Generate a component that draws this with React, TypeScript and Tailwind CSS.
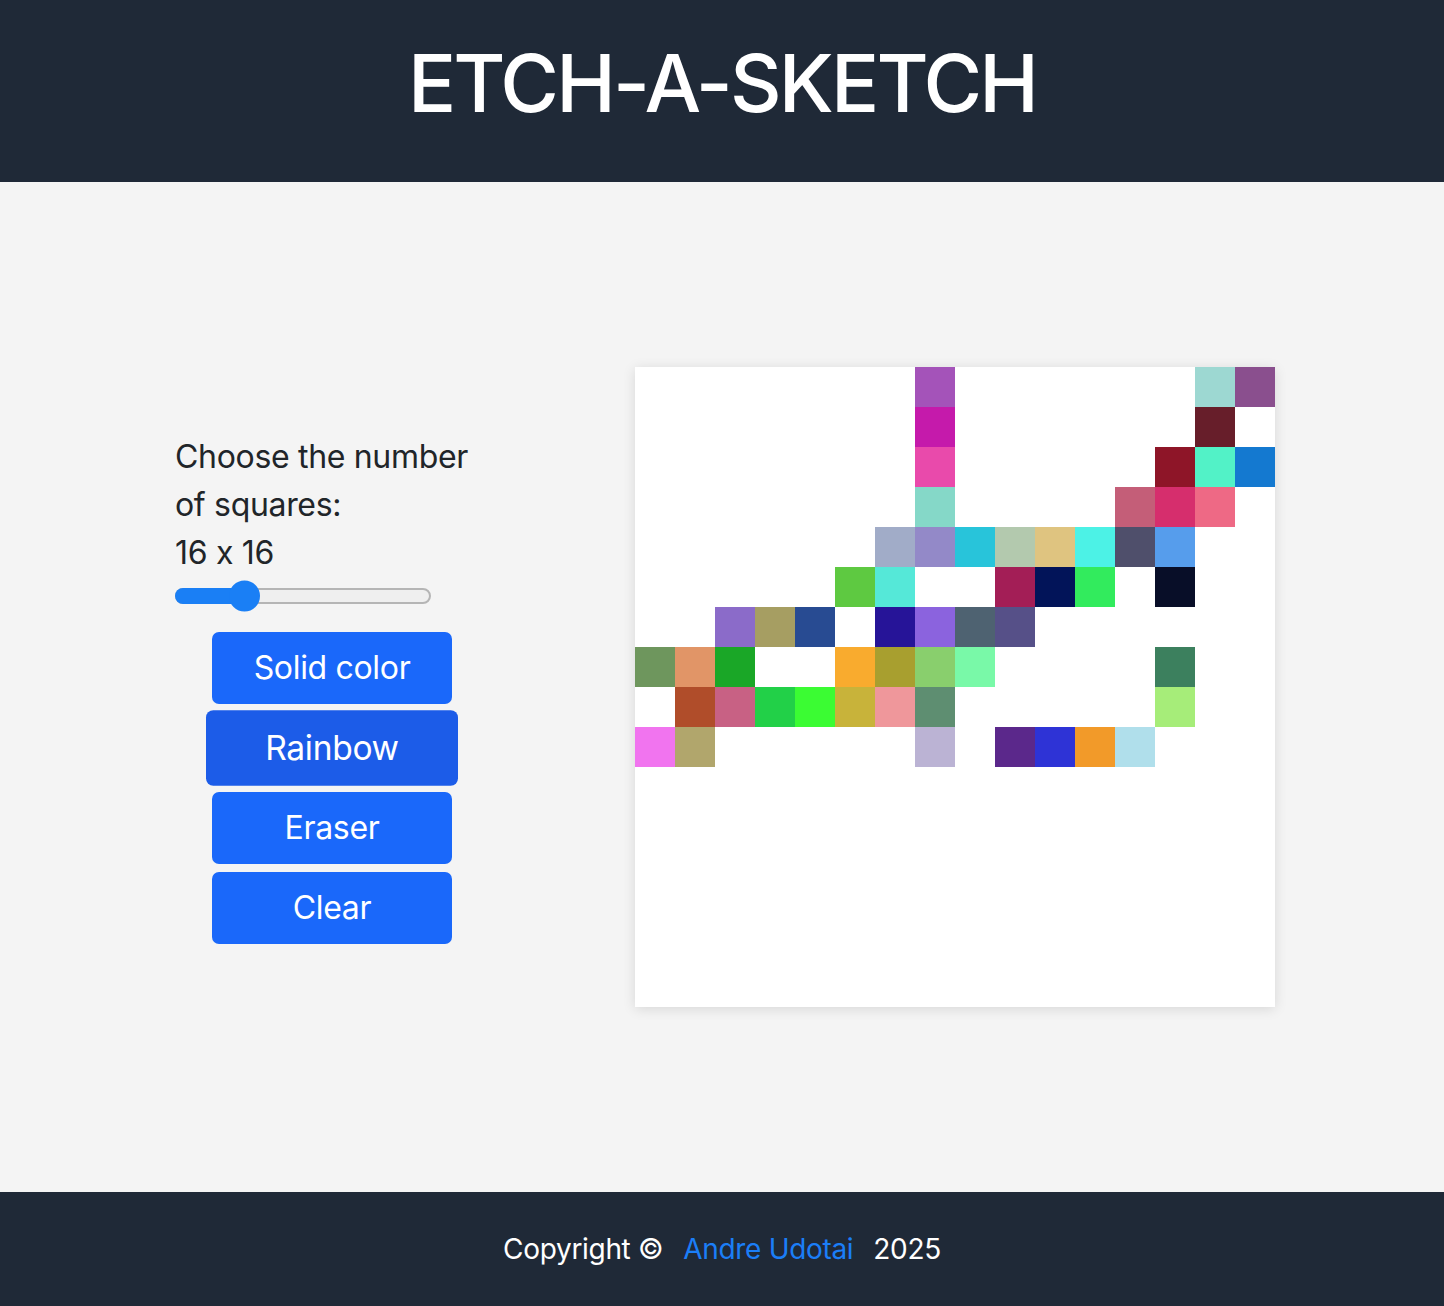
import { useState } from "react";

const W = "#ffffff";

// painted cells, [row, col, colour]; everything else stays white
const painted: [number, number, string][] = [
  [0, 7, "#a453b9"], [0, 14, "#9dd8d2"], [0, 15, "#8a4f8e"],
  [1, 7, "#c51aab"], [1, 14, "#671e2a"],
  [2, 7, "#e94aab"], [2, 13, "#8e1528"], [2, 14, "#52f2c7"], [2, 15, "#1479d0"],
  [3, 7, "#85d8c8"], [3, 12, "#c45e78"], [3, 13, "#d62e6d"], [3, 14, "#ee6985"],
  [4, 6, "#a1acc8"], [4, 7, "#9389c8"], [4, 8, "#28c4da"], [4, 9, "#b3c9ae"],
  [4, 10, "#dfc480"], [4, 11, "#4cf2e6"], [4, 12, "#4f4f6b"], [4, 13, "#569dec"],
  [5, 5, "#5ec941"], [5, 6, "#55e8d8"], [5, 9, "#a31e56"], [5, 10, "#021459"],
  [5, 11, "#32eb5d"], [5, 13, "#080e28"],
  [6, 2, "#8b6bc9"], [6, 3, "#a69e62"], [6, 4, "#284b92"], [6, 6, "#261498"],
  [6, 7, "#8b63de"], [6, 8, "#4e6271"], [6, 9, "#565088"],
  [7, 0, "#6e965d"], [7, 1, "#e19567"], [7, 2, "#1aa727"], [7, 5, "#f9ab2e"],
  [7, 6, "#a89f2f"], [7, 7, "#89cf6d"], [7, 8, "#79f9a8"], [7, 13, "#3c805e"],
  [8, 1, "#b04d2a"], [8, 2, "#c86184"], [8, 3, "#22d048"], [8, 4, "#3bfc33"],
  [8, 5, "#c8b33a"], [8, 6, "#ef979b"], [8, 7, "#5e8e71"], [8, 13, "#a6ed79"],
  [9, 0, "#f174ef"], [9, 1, "#b1a66c"], [9, 7, "#bbb3d4"], [9, 9, "#5b288b"],
  [9, 10, "#2e33d6"], [9, 11, "#f29a29"], [9, 12, "#b0dfeb"],
];

function buildGrid(size: number) {
  const cells: string[] = Array(size * size).fill(W);
  painted.forEach(([r, c, col]) => {
    cells[r * size + c] = col;
  });
  return cells;
}

function SizeSlider({ value, min, max }: { value: number; min: number; max: number }) {
  const pct = (value - min) / (max - min);
  return (
    <div className="relative mt-[11px] h-[16px] w-[256px]">
      <div className="absolute inset-0 rounded-full border-2 border-[#b5b5b5] bg-[#efefef]" />
      <div
        className="absolute left-0 top-0 h-full rounded-l-full bg-[#1a7ff5]"
        style={{ width: `${15 + pct * 226}px` }}
      />
      <div
        className="absolute top-1/2 h-[31px] w-[31px] -translate-y-1/2 rounded-full bg-[#1a7ff5]"
        style={{ left: `${pct * 226}px` }}
      />
    </div>
  );
}

const btn =
  "flex h-[72px] w-[240px] items-center justify-center rounded-[7px] bg-[#1a68fa] text-[32px] text-white";

export default function App() {
  const [size] = useState(16);
  const cells = buildGrid(size);

  return (
    <div className="flex min-h-[1306px] flex-col bg-[#f4f4f4] font-['Inter',sans-serif] tracking-[-0.02em] [font-feature-settings:'calt'_0]">
      <header className="flex h-[182px] items-center justify-center bg-[#1f2937] pb-[16px]">
        <h1 className="text-[80px] font-medium leading-none tracking-[-0.035em] text-white">
          ETCH-A-SKETCH
        </h1>
      </header>

      <main className="flex flex-1 items-center justify-center gap-[146px] pl-[6px]">
        <div className="flex w-[314px] flex-col pt-[3px] text-[#212529]">
          <p className="text-[32px] leading-[48px]">Choose the number of squares:</p>
          <p className="text-[32px] leading-[48px]">
            {size} x {size}
          </p>
          <SizeSlider value={size} min={1} max={64} />
          <div className="mt-[28px] flex flex-col items-center gap-[8px]">
            <button type="button" className={btn}>
              Solid color
            </button>
            {/* hovered button, grown in place */}
            <button type="button" className={`${btn} scale-[1.05] bg-[#1c5ce8]`}>
              Rainbow
            </button>
            <button type="button" className={btn}>
              Eraser
            </button>
            <button type="button" className={btn}>
              Clear
            </button>
          </div>
        </div>

        <div className="grid h-[640px] w-[640px] grid-cols-[repeat(16,40px)] grid-rows-[repeat(16,40px)] bg-white shadow-[0_2px_12px_rgba(0,0,0,0.12)]">
          {cells.map((c, i) => (
            <div key={i} style={{ backgroundColor: c }} />
          ))}
        </div>
      </main>

      <footer className="flex h-[114px] items-center justify-center gap-[20px] bg-[#1f2937] text-[28px] text-white">
        <span>Copyright ©</span>
        <a href="#" className="text-[#1b7ef7]">
          Andre Udotai
        </a>
        <span>2025</span>
      </footer>
    </div>
  );
}
